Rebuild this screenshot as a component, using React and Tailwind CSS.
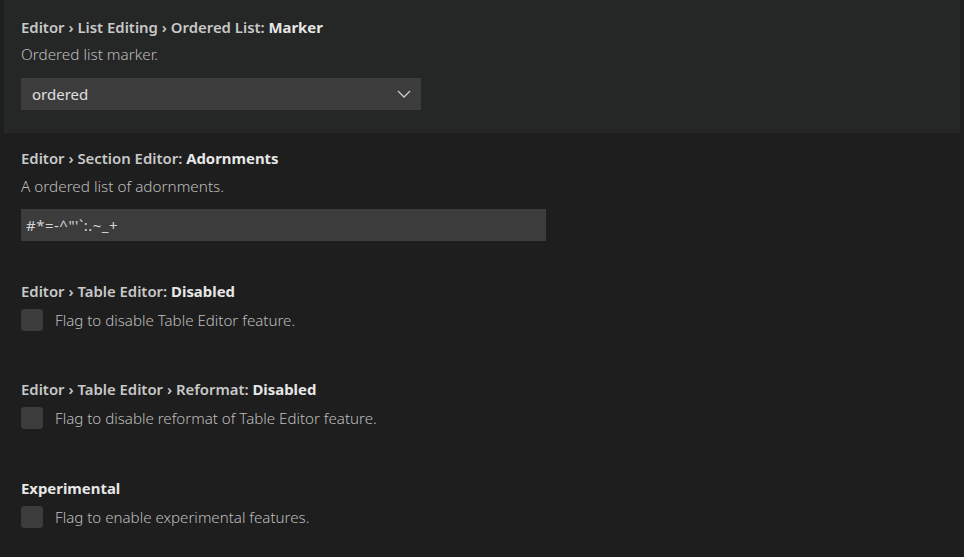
import React from "react";

function Title({ cat, name }) {
  return (
    <div className="h-[18px] leading-[18px] text-[14.9px] font-semibold text-[#c8c8c8] whitespace-nowrap">
      {cat}
      <span className="text-[#e7e7e7] font-bold">{name}</span>
    </div>
  );
}

function CheckRow({ text }) {
  return (
    <div className="flex items-center mt-[9px] h-[22px]">
      <div className="w-[22px] h-[22px] rounded-[3px] bg-[#3c3c3c] border border-[#3c3c3c]" />
      <span className="ml-[12px] text-[15.1px] leading-[18px] font-light text-[#bdbdbd]">{text}</span>
    </div>
  );
}

export default function App() {
  return (
    <div className="w-[964px] h-[557px] overflow-hidden bg-[#1e1e1e] font-['Noto_Sans',sans-serif]">
      <div className="mx-[4px] h-[133px] bg-[#252626] pl-[17px] pt-[18px]">
        <Title cat="Editor › List Editing › Ordered List: " name="Marker" />
        <div className="mt-[9px] h-[18px] leading-[18px] text-[15.3px] font-light text-[#bdbdbd]">Ordered list marker.</div>
        <div className="mt-[15px] w-[400px] h-[32px] bg-[#3c3c3c] flex items-center justify-between pl-[11px] pr-[9px]">
          <span className="text-[15px] text-[#e0e0e0]">ordered</span>
          <svg width="16" height="16" viewBox="0 0 16 16" fill="none">
            <path d="M2 5 L8 11 L14 5" stroke="#cccccc" strokeWidth="1.3" />
          </svg>
        </div>
      </div>

      <div className="pl-[21px] pt-[16px]">
        <Title cat="Editor › Section Editor: " name="Adornments" />
        <div className="mt-[10px] h-[18px] leading-[18px] text-[15.3px] font-light text-[#bdbdbd]">A ordered list of adornments.</div>
        <div className="mt-[14px] w-[525px] h-[32px] bg-[#3c3c3c] flex items-center pl-[5px]">
          <span className="text-[15px] tracking-[0.5px] text-[#d4d4d4]">{"#*=-^\"'`:.~_+"}</span>
        </div>
      </div>

      <div className="pl-[21px] pt-[41px]">
        <Title cat="Editor › Table Editor: " name="Disabled" />
        <CheckRow text="Flag to disable Table Editor feature." />
      </div>

      <div className="pl-[21px] pt-[49px]">
        <Title cat="Editor › Table Editor › Reformat: " name="Disabled" />
        <CheckRow text="Flag to disable reformat of Table Editor feature." />
      </div>

      <div className="pl-[21px] pt-[50px]">
        <Title cat="" name="Experimental" />
        <CheckRow text="Flag to enable experimental features." />
      </div>
    </div>
  );
}
